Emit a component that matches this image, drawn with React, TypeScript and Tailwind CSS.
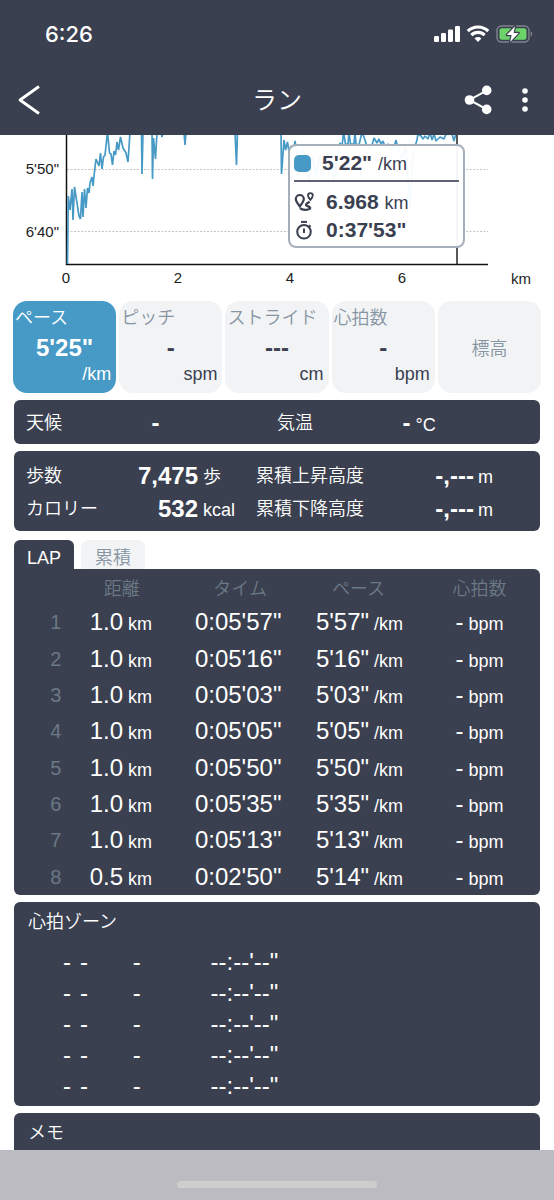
import { Fragment } from 'react';

const metrics = [
  { label: 'ペース', value: '5\'25"', unit: '/km' },
  { label: 'ピッチ', value: '-', unit: 'spm' },
  { label: 'ストライド', value: '---', unit: 'cm' },
  { label: '心拍数', value: '-', unit: 'bpm' },
  { label: '標高' },
];

const laps = [
  { distance: '1.0', time: '0:05\'57"', pace: '5\'57"' },
  { distance: '1.0', time: '0:05\'16"', pace: '5\'16"' },
  { distance: '1.0', time: '0:05\'03"', pace: '5\'03"' },
  { distance: '1.0', time: '0:05\'05"', pace: '5\'05"' },
  { distance: '1.0', time: '0:05\'50"', pace: '5\'50"' },
  { distance: '1.0', time: '0:05\'35"', pace: '5\'35"' },
  { distance: '1.0', time: '0:05\'13"', pace: '5\'13"' },
  { distance: '0.5', time: '0:02\'50"', pace: '5\'14"' },
];

const zones = [1, 2, 3, 4, 5];

const pacePoints =
  '67.5,129 68.3,61 70,75 72,54 73,85 74.5,52 77,68 79,81 80.5,84 82,57 83,82 84.5,54 86,73 87.5,53 89,58 90,48 92,42 93,51 95,32 96,24 99,31 100.5,18 102,34 103.5,22 105,20 107.5,-3 109.5,18 111,19 112.5,30 114,16 115.5,20 117,7 118.5,15 120.5,2 123,13 126,18 128,27 130,-3 141.5,-3 142,39 143,-3 152,-3 152.5,44 153.5,3 155.5,24 157,-3 161,-3 162,2 163,-3 184,-3 185,10 186,-3 235,-3 236.5,30 237.5,-3 281,-3 281.5,39 284,5 285.5,15 287.5,7 289,17 291,11 294,14 295,6 297,18 303,14 306,30 309,46 313,22 316,42 320,20 324,38 328,16 334,48 338,17 340,8 342,12 343.5,-3 345.5,9 348,9 349,-3 350.5,9 354,9 355,-3 356,9 359,10 362,-3 365,5 367,12 371,14 374,3 377,8 379,4 381,9 383,6 385,12 388,9 391,15 394,12 396,5 398,14 402,24 406,12 410,72 413,18 417,5 418,-1 421,1 423,4 425,1 428,4 430,-3 432,5 434,-1 436,6 438,4 440,2 444,4 446,-1 449,-3 452,-1 454,6 456,-2';

const StatusIcons = () => (
  <svg viewBox="0 0 100 20" className="w-[100px] h-5" aria-hidden="true">
    <g fill="#fff">
      <rect x="0" y="12" width="5" height="6" rx="1.2" />
      <rect x="7" y="9" width="5" height="9" rx="1.2" />
      <rect x="14" y="5.5" width="5" height="12.5" rx="1.2" />
      <rect x="21" y="2" width="5" height="16" rx="1.2" />
    </g>
    <g fill="none" stroke="#fff" strokeWidth="3.2">
      <path d="M33.8 7.2A14.5 14.5 0 0 1 54.2 7.2" />
      <path d="M37.4 11.2A9.3 9.3 0 0 1 50.6 11.2" />
    </g>
    <path d="M40.6 14.4A4.8 4.8 0 0 1 47.4 14.4L44 18Z" fill="#fff" />
    <rect x="63" y="2" width="32" height="16" rx="4.5" fill="none" stroke="#7f838d" strokeWidth="1.4" />
    <path d="M96.8 7.5A3.3 3.3 0 0 1 96.8 12.5Z" fill="#9a9da5" />
    <rect x="65.5" y="4.3" width="27" height="11.4" rx="2.2" fill="#6bd36a" />
    <path
      d="M81 2.2L72.8 11H77.6L76.2 18L84.6 9H79.6Z"
      fill="#fff"
      stroke="#3a404f"
      strokeWidth="2.4"
      paintOrder="stroke"
      strokeLinejoin="round"
    />
  </svg>
);

const RouteIcon = () => (
  <svg viewBox="0 0 20 20" className="w-5 h-5" fill="none" stroke="#3a4050" aria-hidden="true">
    <path d="M5.8 14.5C3.3 11.2 1.8 9.3 1.8 7A4 4 0 0 1 9.8 7C9.8 9.3 8.3 11.2 5.8 14.5Z" strokeWidth="2.2" />
    <path d="M16.4 7.8C14.9 6 14 4.8 14 3.5A2.4 2.4 0 0 1 18.8 3.5C18.8 4.8 17.9 6 16.4 7.8Z" strokeWidth="1.8" />
    <path d="M6 16.2C8.5 18.4 14 18.2 16 16.6C17 14.6 12.6 14.6 12 12.8C11.9 11.4 13.8 11 15.6 9.8" strokeWidth="2.4" />
  </svg>
);

const StopwatchIcon = () => (
  <svg viewBox="0 0 20 20" className="w-5 h-5" fill="none" stroke="#3a4050" aria-hidden="true">
    <circle cx="10" cy="11.8" r="6.8" strokeWidth="2" />
    <path d="M7 1.9H13" strokeWidth="2" />
    <path d="M10 8.5V13" strokeWidth="2" />
    <path d="M15 5.2L16.6 6.8" strokeWidth="1.8" />
  </svg>
);

const Header = () => (
  <header className="bg-[#3a4050] text-white">
    <div className="flex items-center justify-between h-[68px] pl-[45px] pr-5">
      <span className="font-['Inter'] font-medium text-[22px]">6:26</span>
      <StatusIcons />
    </div>
    <div className="grid grid-cols-[1fr_auto_1fr] items-center h-[67px] pb-1 px-[18px]">
      <button type="button" aria-label="戻る" className="justify-self-start">
        <svg viewBox="0 0 22 30" className="w-[22px] h-[30px]" fill="none" stroke="#fff" strokeWidth="2.8">
          <path d="M21 1.5L2 15L21 28.5" strokeLinejoin="round" />
        </svg>
      </button>
      <h1 className="text-[25px] leading-8 font-[350]">ラン</h1>
      <div className="flex items-center gap-[30px] justify-self-end pr-2">
        <button type="button" aria-label="共有">
          <svg viewBox="0 0 28 30" className="w-7 h-[30px]" fill="#fff">
            <path d="M23 5.3L5.5 15L23 24.5" fill="none" stroke="#fff" strokeWidth="2" />
            <circle cx="5.5" cy="15" r="4.8" />
            <circle cx="22.7" cy="5.4" r="4.8" />
            <circle cx="22.7" cy="24.4" r="4.8" />
          </svg>
        </button>
        <button type="button" aria-label="メニュー">
          <svg viewBox="0 0 6 26" className="w-[6px] h-[26px]" fill="#fff">
            <circle cx="3" cy="4" r="2.8" />
            <circle cx="3" cy="13" r="2.8" />
            <circle cx="3" cy="22" r="2.8" />
          </svg>
        </button>
      </div>
    </div>
  </header>
);

const PaceChart = () => (
  <section className="relative" aria-label="ペースグラフ">
    <svg viewBox="0 0 554 160" className="block w-full" fontSize="15" fill="#222">
      <g stroke="#c4c4c4" strokeWidth="1" strokeDasharray="2 1.5">
        <path d="M67 34.5H488" />
        <path d="M67 96.5H488" />
      </g>
      <path d="M66.5 0V129.5H488" fill="none" stroke="#111" strokeWidth="1.5" />
      <polyline points={pacePoints} fill="none" stroke="#469ac5" strokeWidth="1.7" strokeLinejoin="bevel" />
      <path d="M457 0V129" stroke="#222" strokeWidth="1.5" />
      <text x="59" y="39" textAnchor="end">5'50"</text>
      <text x="59" y="102" textAnchor="end">6'40"</text>
      <text x="66" y="148" textAnchor="middle">0</text>
      <text x="178" y="148" textAnchor="middle">2</text>
      <text x="290" y="148" textAnchor="middle">4</text>
      <text x="402" y="148" textAnchor="middle">6</text>
      <text x="521" y="149" textAnchor="middle">km</text>
    </svg>
    <div className="absolute left-[52%] top-[9px] w-[177px] h-[104px] px-1 rounded-lg border-2 border-[#a5afba] bg-white/95 text-[#3a4050] text-[21px] leading-7">
      <div className="flex items-center gap-[11px] h-9 border-b-2 border-[#5d6373]">
        <span className="w-[17px] h-[17px] rounded-[5px] bg-[#469ac5]"></span>
        <p>
          <b>5'22"</b> <span className="text-lg leading-6">/km</span>
        </p>
      </div>
      <div className="flex items-center gap-3 pt-[6px]">
        <RouteIcon />
        <p>
          <b>6.968</b> <span className="text-lg leading-6">km</span>
        </p>
      </div>
      <div className="flex items-center gap-3">
        <StopwatchIcon />
        <b>0:37'53"</b>
      </div>
    </div>
  </section>
);

const MetricTabs = () => (
  <div className="grid grid-cols-5 gap-[3px] px-[13px] pt-[6px]">
    {metrics.map((m, i) => (
      <button
        key={m.label}
        type="button"
        className={`flex flex-col h-[92px] rounded-[14px] text-lg ${
          i === 0 ? 'bg-[#469ac5] text-white' : 'bg-[#f1f3f5] text-[#3a4050]'
        } ${m.value ? 'pt-1 px-[2px]' : 'items-center justify-center pt-1'}`}
      >
        <span
          className={`leading-[26px] font-[350] whitespace-nowrap ${m.value ? 'self-start' : ''} ${
            i === 0 ? 'text-white' : 'text-[#8795a3]'
          }`}
        >
          {m.label}
        </span>
        {m.value && (
          <>
            <span className="self-center text-2xl leading-[33px] font-bold">{m.value}</span>
            <span className="self-end pr-[3px] leading-5">{m.unit}</span>
          </>
        )}
      </button>
    ))}
  </div>
);

const Summary = () => (
  <>
    <section className="flex items-center h-[44px] mt-[7px] pt-[2px] px-3 rounded-md bg-[#3a404f] text-white text-lg font-[350]">
      <span className="w-[25%]">天候</span>
      <span className="w-[25%] text-2xl font-bold">-</span>
      <span className="w-[25%]">気温</span>
      <p>
        <span className="text-2xl font-bold">-</span> °C
      </p>
    </section>
    <section className="grid grid-cols-[114px_58px_1fr_140px_78px_1fr] items-center gap-y-[1px] mt-[7px] pt-[9px] pb-[6px] pl-3 rounded-md bg-[#3a404f] text-white text-lg leading-8 font-[350]">
      {[
        ['歩数', '7,475', '歩', '累積上昇高度', '-,---', 'm'],
        ['カロリー', '532', 'kcal', '累積下降高度', '-,---', 'm'],
      ].map((row, i) => (
        <Fragment key={i}>
          <span>{row[0]}</span>
          <span className="justify-self-end text-2xl leading-8 font-bold">{row[1]}</span>
          <span className="w-[59px] pl-[5px] pt-[3px] leading-[29px]">{row[2]}</span>
          <span className="-ml-1">{row[3]}</span>
          <span className="justify-self-end pr-1 text-2xl leading-8 font-bold">{row[4]}</span>
          <span className="pt-[3px] leading-[29px]">{row[5]}</span>
        </Fragment>
      ))}
    </section>
  </>
);

const LapTable = () => (
  <section className="mt-[9px]">
    <div className="flex gap-[7px] text-lg" role="tablist">
      <button type="button" role="tab" aria-selected="true" className="h-[29px] px-[13px] pt-[6px] rounded-t-md bg-[#3a404f] text-white leading-6">
        LAP
      </button>
      <button
        type="button"
        role="tab"
        aria-selected="false"
        className="h-[29px] px-[14px] pt-[6px] rounded-t-lg bg-[#f1f3f5] text-[#8795a3] leading-6 font-[350]"
      >
        累積
      </button>
    </div>
    <div className="pt-px rounded-md rounded-tl-none bg-[#3a404f] text-white">
      <table className="w-full h-[325px] table-fixed text-lg leading-6 text-center whitespace-nowrap">
        <thead>
          <tr className="h-[34px] text-[#6b7886]">
            <th className="w-[9%]" aria-label="番号"></th>
            <th className="w-[23%] pt-1 font-[350]">距離</th>
            <th className="w-[22%] pt-1 font-[350]">タイム</th>
            <th className="w-[23%] pt-1 font-[350]">ペース</th>
            <th className="w-[23%] pt-1 font-[350]">心拍数</th>
          </tr>
        </thead>
        <tbody>
          {laps.map((lap, i) => (
            <tr key={i}>
              <td className="text-right text-xl text-[#6b7886]">{i + 1}</td>
              <td className="pr-[2px]">
                <span className="text-2xl">{lap.distance}</span> km
              </td>
              <td className="pr-1 text-2xl">{lap.time}</td>
              <td className="pl-[2px]">
                <span className="text-2xl">{lap.pace}</span> /km
              </td>
              <td>
                <span className="text-2xl">-</span> bpm
              </td>
            </tr>
          ))}
        </tbody>
      </table>
    </div>
  </section>
);

const HeartRateZones = () => (
  <section className="mt-[7px] pt-[6px] pb-[5px] rounded-md bg-[#3a404f] text-white">
    <h2 className="pl-[14px] pb-[10px] text-lg leading-[28px] font-[350]">心拍ゾーン</h2>
    <table className="w-full table-fixed text-2xl leading-[31px]">
      <tbody>
        {zones.map((zone) => (
          <tr key={zone}>
            <td className="w-[22%] p-0 pl-[49px]">
              <span className="flex gap-[9px]">
                <span>-</span>
                <span>-</span>
              </span>
            </td>
            <td className="w-[15%] p-0 pl-[3px]">-</td>
            <td className="p-0 pl-[2px]">--:--'--"</td>
          </tr>
        ))}
      </tbody>
    </table>
  </section>
);

export default function App() {
  return (
    <div className="flex flex-col min-h-screen bg-white font-['Liberation_Sans','Noto_Sans_CJK_JP',sans-serif]">
      <Header />
      <main className="flex flex-col flex-1">
        <PaceChart />
        <MetricTabs />
        <div className="flex flex-col flex-1 px-[14px]">
          <Summary />
          <LapTable />
          <HeartRateZones />
          <section className="flex-1 mt-[7px] pt-[6px] pl-[14px] rounded-t-md bg-[#3a404f] text-white">
            <h2 className="text-lg leading-[28px] font-[350]">メモ</h2>
          </section>
        </div>
      </main>
      <footer className="flex items-end justify-center h-[50px] pb-3 bg-[#bcbbc1]">
        <div className="w-[36%] h-[7px] rounded-full bg-[#cecece]"></div>
      </footer>
    </div>
  );
}
